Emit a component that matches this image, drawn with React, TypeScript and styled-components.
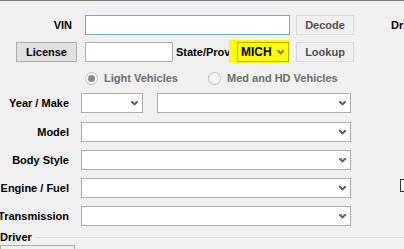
import React from "react";
import styled, { createGlobalStyle } from "styled-components";

const GlobalStyle = createGlobalStyle`
  html, body {
    margin: 0;
    padding: 0;
    background: #f0f0f0;
  }
  body {
    font-family: "Liberation Sans", Arial, sans-serif;
    font-size: 11px;
    font-weight: bold;
    color: #000;
  }
`;

const Window = styled.div`
  width: 404px;
  height: 249px;
  overflow: hidden;
  border-top: 1px solid #7a7a7a;
  box-sizing: border-box;
  padding-top: 14px;
  background: #f0f0f0;
`;

const Row = styled.div<{ $top?: number }>`
  display: flex;
  align-items: center;
  height: 20px;
  margin-top: ${(p) => p.$top ?? 0}px;
  white-space: nowrap;
`;

const Label = styled.div<{ $width: number }>`
  flex: none;
  width: ${(p) => p.$width}px;
  display: flex;
  justify-content: flex-end;
  white-space: nowrap;
  line-height: 13px;
`;

const InlineLabel = styled.div<{ $left: number; $width: number }>`
  flex: none;
  margin-left: ${(p) => p.$left}px;
  width: ${(p) => p.$width}px;
  line-height: 13px;
`;

const TextBox = styled.div<{ $left: number; $width: number; $focused?: boolean }>`
  flex: none;
  box-sizing: border-box;
  margin-left: ${(p) => p.$left}px;
  width: ${(p) => p.$width}px;
  height: 20px;
  background: #fff;
  border: 1px solid ${(p) => (p.$focused ? "#7aa7da" : "#adadad")};
`;

const Button = styled.div<{ $left: number; $width: number; $disabled?: boolean }>`
  flex: none;
  box-sizing: border-box;
  margin-left: ${(p) => p.$left}px;
  width: ${(p) => p.$width}px;
  height: 20px;
  display: flex;
  align-items: center;
  justify-content: center;
  background: ${(p) => (p.$disabled ? "#efefef" : "#e1e1e1")};
  border: 1px solid ${(p) => (p.$disabled ? "#d9d9d9" : "#adadad")};
  color: ${(p) => (p.$disabled ? "#4f4f4f" : "#000")};
`;

const Highlight = styled.div`
  flex: none;
  box-sizing: border-box;
  width: 61px;
  height: 23px;
  margin: -2px 0 -1px;
  padding: 2px 1px 1px 8px;
  background: #ffff00;
`;

const Combo = styled.div<{ $left?: number; $width: number; $yellow?: boolean }>`
  flex: none;
  box-sizing: border-box;
  margin-left: ${(p) => p.$left ?? 0}px;
  width: ${(p) => p.$width}px;
  height: 20px;
  display: flex;
  align-items: center;
  padding: 0 4px 0 3px;
  background: ${(p) => (p.$yellow ? "#ffff00" : "#fff")};
  border: 1px solid ${(p) => (p.$yellow ? "#b0b000" : "#adadad")};
`;

const ComboText = styled.span`
  flex: 1;
  font-size: 12px;
  line-height: 14px;
`;

const RadioRow = styled.div`
  display: flex;
  align-items: center;
  height: 12px;
  margin-top: 10px;
  padding-left: 85px;
  white-space: nowrap;
`;

const RadioOption = styled.div<{ $width?: number }>`
  flex: none;
  display: flex;
  align-items: center;
  gap: 6px;
  width: ${(p) => (p.$width ? `${p.$width}px` : "auto")};
  color: #6d6d6d;
  line-height: 13px;
`;

const RadioCircle = styled.span<{ $checked?: boolean }>`
  flex: none;
  box-sizing: border-box;
  width: 13px;
  height: 13px;
  border-radius: 50%;
  border: 1px solid #c4c4c4;
  background: #f4f4f4;
  display: flex;
  align-items: center;
  justify-content: center;
  &::after {
    content: "";
    width: 7px;
    height: 7px;
    border-radius: 50%;
    background: ${(p) => (p.$checked ? "#8a8a8a" : "transparent")};
  }
`;

const Checkbox = styled.div`
  flex: none;
  box-sizing: border-box;
  margin-left: 49px;
  margin-top: -6px;
  width: 13px;
  height: 13px;
  background: #fff;
  border: 1px solid #333;
`;

const GroupHeader = styled.div`
  display: flex;
  align-items: center;
  margin-top: 5px;
  line-height: 13px;
  white-space: nowrap;
`;

const GroupLine = styled.div`
  flex: 1;
  margin-left: 3px;
  border-top: 1px solid #dcdcdc;
`;

const GroupBox = styled.div`
  box-sizing: border-box;
  margin-top: 1px;
  width: 75px;
  height: 20px;
  border: 1px solid #adadad;
  background: #f0f0f0;
`;

const Arrow = ({ color = "#606060" }: { color?: string }) => (
  <svg width="7" height="5" viewBox="0 0 7 5">
    <path d="M0 0 H1.6 L3.5 2 L5.4 0 H7 V1.2 L3.5 4.8 L0 1.2 Z" fill={color} />
  </svg>
);

type ComboProps = {
  left?: number;
  width: number;
  value?: string;
  yellow?: boolean;
};

function ComboBox(props: ComboProps) {
  return (
    <Combo $left={props.left} $width={props.width} $yellow={props.yellow}>
      <ComboText>{props.value}</ComboText>
      <Arrow color={props.yellow ? "#7a7a00" : "#606060"} />
    </Combo>
  );
}

export default function App() {
  return (
    <>
      <GlobalStyle />
      <Window>
        <Row>
          <Label $width={72}>VIN</Label>
          <TextBox $left={13} $width={205} $focused />
          <Button $left={6} $width={58} $disabled>
            Decode
          </Button>
          <InlineLabel $left={37} $width={60}>
            Driver
          </InlineLabel>
        </Row>

        <Row $top={7}>
          <Button $left={16} $width={61}>
            License
          </Button>
          <TextBox $left={8} $width={88} />
          <InlineLabel $left={3} $width={53}>
            State/Prov
          </InlineLabel>
          <Highlight>
            <ComboBox width={52} value="MICH" yellow />
          </Highlight>
          <Button $left={6} $width={58} $disabled>
            Lookup
          </Button>
        </Row>

        <RadioRow>
          <RadioOption $width={123}>
            <RadioCircle $checked />
            Light Vehicles
          </RadioOption>
          <RadioOption>
            <RadioCircle />
            Med and HD Vehicles
          </RadioOption>
        </RadioRow>

        <Row $top={9}>
          <Label $width={69}>Year / Make</Label>
          <ComboBox left={12} width={62} />
          <ComboBox left={14} width={194} />
        </Row>
        <Row $top={9}>
          <Label $width={69}>Model</Label>
          <ComboBox left={12} width={270} />
        </Row>
        <Row $top={8}>
          <Label $width={69}>Body Style</Label>
          <ComboBox left={12} width={270} />
        </Row>
        <Row $top={8}>
          <Label $width={69}>Engine / Fuel</Label>
          <ComboBox left={12} width={270} />
          <Checkbox />
        </Row>
        <Row $top={8}>
          <Label $width={69}>Transmission</Label>
          <ComboBox left={12} width={270} />
        </Row>

        <GroupHeader>
          Driver
          <GroupLine />
        </GroupHeader>
        <GroupBox />
      </Window>
    </>
  );
}
